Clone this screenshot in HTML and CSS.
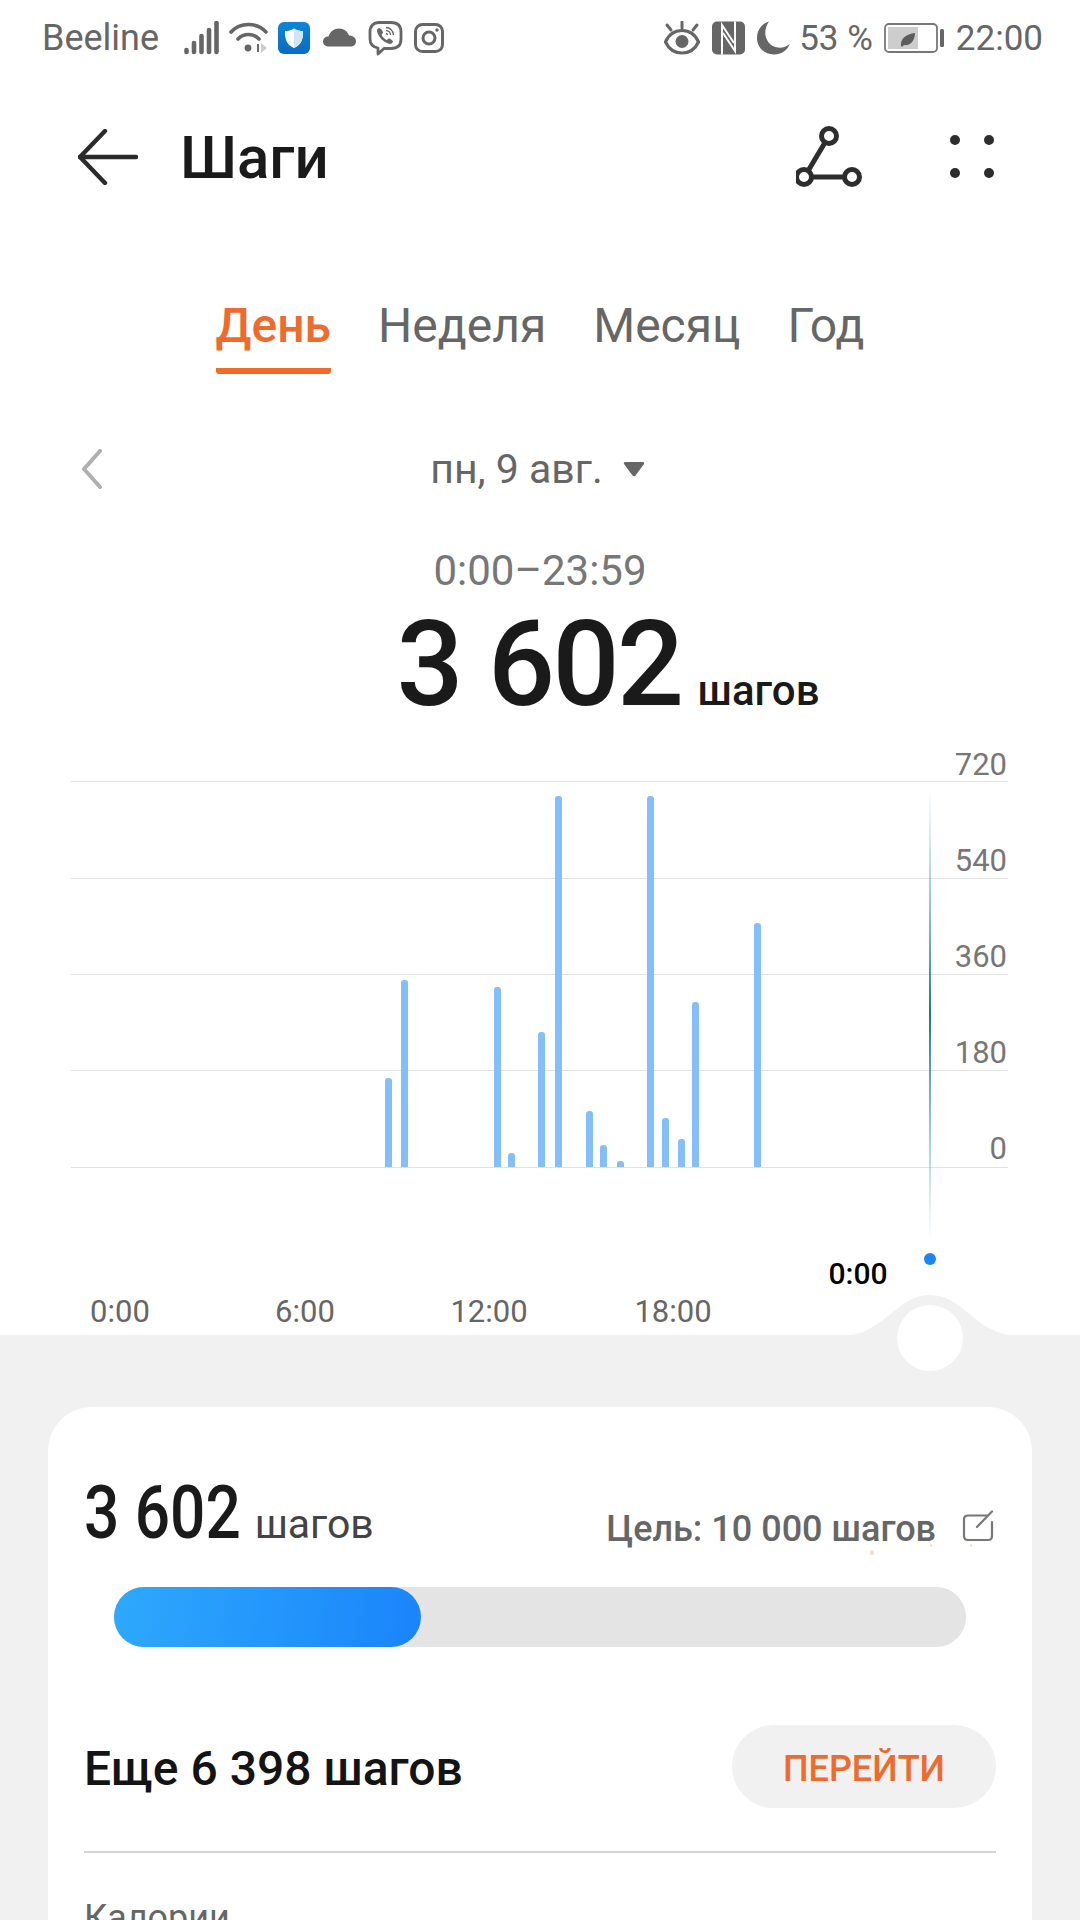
FILE: index.html
```html
<!DOCTYPE html>
<html lang="ru">
<head>
    <meta charset="utf-8">
    <title>Шаги</title>
    <link rel="stylesheet" href="styles.css">
</head>
<body>
    <div class="status-bar">
        <div class="status-left">
            <span class="carrier">Beeline</span>
            <svg class="ico" width="35" height="34" viewBox="0 0 35 34"><g stroke="#666" stroke-width="4.6" stroke-linecap="round"><path d="M2.5 29v2"/><path d="M10 22v9"/><path d="M17.5 15v16"/><path d="M25 9v22"/><path d="M32.5 2v29"/></g></svg>
            <svg class="ico" width="39" height="34" viewBox="0 0 39 34"><g fill="none" stroke="#666" stroke-width="3.6" stroke-linecap="round"><path d="M2 11C11 1 28 1 37 11"/><path d="M9 18C14.500 12 24.500 12 30 18"/></g><circle cx="19" cy="27" r="3.400" fill="#666"/><path d="M28 31V23h2v8z" fill="#666"/><path d="M32 22l6 5-6 5z" fill="#ccc"/></svg>
            <svg class="ico" width="35" height="34" viewBox="0 0 35 34"><defs><linearGradient id="shieldBg" x1="0" y1="0" x2="0" y2="1"><stop offset="0" stop-color="#0c86d8"/><stop offset="1" stop-color="#0a6cbd"/></linearGradient></defs><rect x="0" y="1" width="32" height="32" rx="6" fill="url(#shieldBg)"/><path d="M16 7.500C19 9.500 22 10 25 10C25.500 18 23 24 16 27C9 24 6.500 18 7 10C10 10 13 9.500 16 7.500Z" fill="#fff"/><path d="M16 7.500C19 9.500 22 10 25 10C25.500 18 23 24 16 27Z" fill="#cfe6f6"/></svg>
            <svg class="ico" width="35" height="34" viewBox="0 0 35 34"><path d="M6 25.500C2.500 25.500 0 23.500 0 20.500C0 17.500 2.500 15.500 5.500 15.500C7 10.500 11 7.500 16 7.500C21 7.500 24.500 10.500 26 14.500C30 14.500 33 17 33 20.500C33 23.500 30.500 25.500 27.500 25.500Z" fill="#666"/></svg>
            <svg class="ico" width="36" height="36" viewBox="0 0 36 36"><path d="M11 2.500H23C29.500 2.500 33 6 33 12V19C33 25 29.500 28.500 23 28.500H16L10 34V28C5 27 2 24 2 19V12C2 6 5.500 2.500 11 2.500Z" fill="none" stroke="#666" stroke-width="2.800" stroke-linejoin="round"/><path d="M11 8C9 8.500 8.500 10.500 9.500 13C11.500 18 15 21.500 20 23.500C22.500 24.500 24.500 23.500 25 21.500C25 20.500 21.500 18 20.500 18.500L19 20C17 19.500 14 16.500 13.500 14.500L15 13C15.500 12 13 8 11 8Z" fill="#666"/><g fill="none" stroke="#666" stroke-width="1.300"><path d="M18 7.500C22 7.500 25.500 11 25.500 15"/><path d="M18 10.500C20.500 10.500 22.500 12.500 22.500 15"/><path d="M18 13.500C19 13.500 19.500 14 19.500 15"/></g></svg>
            <svg class="ico" width="30" height="30" viewBox="0 0 30 30"><rect x="1.500" y="1.500" width="27" height="27" rx="7" fill="none" stroke="#666" stroke-width="3"/><circle cx="15" cy="15" r="6" fill="none" stroke="#666" stroke-width="3"/><circle cx="23" cy="7" r="1.700" fill="#666"/></svg>
        </div>
        <div class="status-right">
            <svg class="ico" width="39" height="34" viewBox="0 0 39 34"><g stroke="#666" stroke-width="3" stroke-linecap="round" fill="none"><path d="M18 1v6"/><path d="M3 4l4 5"/><path d="M33 4l-4 5"/></g><path d="M1.500 21C5 13 11 9.500 18 9.500C25 9.500 31 13 34.500 21C31 28.500 25 32 18 32C11 32 5 28.500 1.500 21Z" fill="none" stroke="#666" stroke-width="3.200"/><circle cx="18" cy="20.500" r="6.500" fill="#666"/></svg>
            <svg class="ico" width="36" height="34" viewBox="0 0 36 34"><rect x="0" y="0.500" width="33" height="33" rx="5" fill="#666"/><g fill="none" stroke="#fff" stroke-width="2"><path d="M10 33.500V4L22 22"/><path d="M23 0.500V30L11 12"/></g></svg>
            <svg class="ico" width="33" height="34" viewBox="0 0 33 34"><path d="M12 0.500C4 3 0 10 0 17C0 26.500 7.500 33.500 17 33.500C24 33.500 30 29.500 33 23C27 28 17 28 12 22C7 16 7 8 12 0.500Z" fill="#666"/></svg>
            <span class="battery-pct">53 %</span>
            <svg class="ico" width="65" height="34" viewBox="0 0 65 34"><rect x="3" y="3" width="52" height="28" rx="4" fill="none" stroke="#777" stroke-width="1.800"/><rect x="6" y="6" width="30" height="22" fill="#cdcdcd"/><rect x="58" y="8" width="4" height="18" rx="1.500" fill="#666"/><path d="M19 25C18 18 24 13 33 12C33 20 28 25 22 24L20 26Z" fill="#5c5c5c"/></svg>
            <span class="clock">22:00</span>
        </div>
    </div>

    <div class="top-bar">
        <svg class="back-arrow" width="60" height="56" viewBox="0 0 60 56"><g fill="none" stroke="#2b2b2b" stroke-width="4.400" stroke-linecap="round" stroke-linejoin="round"><path d="M27 2L2 28L27 54"/><path d="M2 28H58"/></g></svg>
        <h1 class="page-title">Шаги</h1>
        <svg class="path-icon" width="66" height="64" viewBox="0 0 66 64"><g fill="none" stroke="#2d2d2d" stroke-width="5"><circle cx="33" cy="11" r="7.500"/><circle cx="8" cy="52" r="7.500"/><circle cx="56" cy="52" r="7.500"/><path d="M29 17.500L12 46"/><path d="M15.500 52H48.500"/></g></svg>
        <svg class="more-icon" width="44" height="44" viewBox="0 0 44 44"><g fill="#2d2d2d"><circle cx="5" cy="5" r="5"/><circle cx="39" cy="5" r="5"/><circle cx="5" cy="38" r="5"/><circle cx="39" cy="38" r="5"/></g></svg>
    </div>

    <div class="tabs">
        <div class="tab tab-active">День</div>
        <div class="tab">Неделя</div>
        <div class="tab">Месяц</div>
        <div class="tab">Год</div>
    </div>

    <div class="date-row">
        <svg class="date-prev" width="24" height="40" viewBox="0 0 24 40"><path d="M20 2L4 20L20 38" fill="none" stroke="#b0b0b0" stroke-width="4" stroke-linecap="round" stroke-linejoin="round"/></svg>
        <span class="date-text">пн, 9 авг.</span>
        <svg class="date-caret" width="22" height="16" viewBox="0 0 22 16"><path d="M2 1H20C21 1 21.500 2 21 3L12.500 14.500C11.800 15.500 10.200 15.500 9.500 14.500L1 3C0.500 2 1 1 2 1Z" fill="#666"/></svg>
    </div>

    <div class="range">0:00–23:59</div>
    <div class="total"><span class="total-num">3 602</span><span class="total-unit">шагов</span></div>

    <svg class="chart" width="1080" height="595" viewBox="0 740 1080 595">
        <defs>
            <linearGradient id="cursorLine" x1="0" y1="0" x2="0" y2="1">
                <stop offset="0" stop-color="#4aa0c8" stop-opacity="0"/>
                <stop offset="0.5" stop-color="#13799f"/>
                <stop offset="1" stop-color="#4aa0c8" stop-opacity="0"/>
            </linearGradient>
            <clipPath id="barClip"><rect x="0" y="740" width="1080" height="427"/></clipPath>
        </defs>
        <g class="grid-lines">
            <line x1="71" x2="1008" y1="781.500" y2="781.500"/>
            <line x1="71" x2="1008" y1="878.500" y2="878.500"/>
            <line x1="71" x2="1008" y1="974.500" y2="974.500"/>
            <line x1="71" x2="1008" y1="1070.500" y2="1070.500"/>
            <line x1="71" x2="1008" y1="1167.500" y2="1167.500"/>
        </g>
        <g class="bars" clip-path="url(#barClip)">
            <rect x="385" y="1078" width="7" height="95" rx="3"/>
            <rect x="401" y="980" width="7" height="193" rx="3"/>
            <rect x="494" y="987" width="7" height="186" rx="3"/>
            <rect x="508" y="1153" width="7" height="20" rx="3"/>
            <rect x="538" y="1032" width="7" height="141" rx="3"/>
            <rect x="555" y="796" width="7" height="377" rx="3"/>
            <rect x="586" y="1111" width="7" height="62" rx="3"/>
            <rect x="600" y="1145" width="7" height="28" rx="3"/>
            <rect x="617" y="1161" width="7" height="12" rx="3"/>
            <rect x="647" y="796" width="7" height="377" rx="3"/>
            <rect x="662" y="1118" width="7" height="55" rx="3"/>
            <rect x="678" y="1139" width="7" height="34" rx="3"/>
            <rect x="692" y="1002" width="7" height="171" rx="3"/>
            <rect x="754" y="923" width="7" height="250" rx="3"/>
        </g>
        <rect x="929" y="788" width="2" height="452" fill="url(#cursorLine)"/>
        <g class="y-labels">
            <text x="1007" y="775">720</text>
            <text x="1007" y="871">540</text>
            <text x="1007" y="967">360</text>
            <text x="1007" y="1063">180</text>
            <text x="1007" y="1159">0</text>
        </g>
        <g class="x-labels">
            <text x="120" y="1322">0:00</text>
            <text x="305" y="1322">6:00</text>
            <text x="489" y="1322">12:00</text>
            <text x="673" y="1322">18:00</text>
        </g>
        <text class="cursor-time" x="858" y="1284">0:00</text>
        <circle cx="930" cy="1259" r="6" fill="#1a87f5"/>
        <path d="M840 1336C885 1336 895 1295 930 1295C965 1295 975 1336 1020 1336Z" fill="#f1f1f1"/>
        <circle cx="930" cy="1338" r="33" fill="#fff"/>
    </svg>

    <div class="bottom-panel">
        <div class="card">
            <div class="card-head">
                <div class="card-steps"><span class="card-num">3 602</span><span class="card-unit">шагов</span></div>
                <div class="card-goal">
                    <span>Цель: 10 000 шагов</span>
                    <svg width="32" height="32" viewBox="0 0 32 32"><path d="M25 5.500H6C3.500 5.500 2 7 2 9.500V26C2 28.500 3.500 30 6 30H26C28.500 30 30 28.500 30 26V12" fill="none" stroke="#777" stroke-width="2.200" stroke-linecap="round"/><path d="M15 17L30 1.500" fill="none" stroke="#777" stroke-width="2.200" stroke-linecap="round"/></svg>
                </div>
            </div>
            <div class="progress"><div class="progress-fill" style="width: 36%"></div></div>
            <div class="remain-row">
                <span class="remain-text">Еще 6 398 шагов</span>
                <div class="go-btn">ПЕРЕЙТИ</div>
            </div>
            <div class="divider"></div>
            <div class="stat-label">Калории</div>
            <i class="speck speck-a"></i>
            <i class="speck speck-b"></i>
            <i class="speck speck-c"></i>
        </div>
    </div>
</body>
</html>
```

FILE: styles.css
```css
* {
    box-sizing: border-box;
}
html, body {
    margin: 0;
    height: 1920px;
    overflow: hidden;
}
body {
    width: 1080px;
    font-family: Roboto, "Noto Sans", sans-serif;
    background: #fff;
    color: #1a1a1a;
}
.ico {
    display: block;
    flex: none;
}
.status-bar {
    display: flex;
    justify-content: space-between;
    align-items: center;
    height: 76px;
    padding: 0 37px 0 42px;
    color: #666;
    font-size: 36px;
}
.status-left {
    display: flex;
    align-items: center;
    gap: 10px;
}
.carrier {
    margin-right: 15px;
}
.status-right {
    display: flex;
    align-items: center;
    gap: 9px;
    font-size: 35px;
}
.top-bar {
    display: flex;
    align-items: center;
    height: 162px;
    padding: 0 86px 0 78px;
}
.page-title {
    margin: 0 0 0 42px;
    font-size: 60px;
    font-weight: 500;
    color: #1a1a1a;
}
.path-icon {
    margin-left: auto;
}
.more-icon {
    margin-left: 88px;
}
.tabs {
    display: flex;
    justify-content: center;
    gap: 47px;
    margin-top: 58px;
}
.tab {
    height: 78px;
    line-height: 60px;
    font-size: 48px;
    color: #666;
}
.tab-active {
    color: #ee6b2d;
    font-weight: 500;
    border-bottom: 6px solid #ee6b2d;
    border-radius: 0 0 3px 3px;
}
.date-row {
    position: relative;
    display: flex;
    justify-content: center;
    align-items: center;
    gap: 20px;
    height: 50px;
    margin-top: 70px;
    padding-right: 5px;
    color: #666;
    font-size: 41px;
}
.date-prev {
    position: absolute;
    left: 80px;
    top: 5px;
}
.range {
    margin-top: 54px;
    line-height: 46px;
    text-align: center;
    font-size: 42px;
    color: #777;
}
.total {
    display: flex;
    justify-content: center;
    align-items: baseline;
    gap: 16px;
    height: 120px;
    margin-top: 11px;
    padding-left: 136px;
    line-height: 120px;
    color: #1a1a1a;
}
.total-num {
    font-size: 118px;
    font-weight: 500;
    letter-spacing: -2.5px;
}
.total-unit {
    font-size: 42px;
    font-weight: 500;
}
.chart {
    position: relative;
    z-index: 1;
    display: block;
    margin-top: 15px;
    overflow: visible;
}
.grid-lines line {
    stroke: #e2e2e2;
    stroke-width: 1;
}
.bars rect {
    fill: #85bffb;
}
.y-labels text {
    font-size: 31px;
    fill: #777;
    text-anchor: end;
}
.x-labels text {
    font-size: 31px;
    fill: #666;
    text-anchor: middle;
}
.cursor-time {
    font-size: 30px;
    font-weight: 500;
    fill: #000;
    text-anchor: middle;
}
.bottom-panel {
    height: 585px;
    padding: 72px 48px 0;
    background: #f1f1f1;
}
.card {
    position: relative;
    height: 600px;
    padding: 66px 36px 0;
    background: #fff;
    border-radius: 44px;
}
.card-head {
    display: flex;
    justify-content: space-between;
    align-items: flex-start;
    height: 80px;
}
.card-steps {
    line-height: 80px;
}
.card-num {
    display: inline-block;
    margin-right: -30px;
    font-size: 74px;
    font-weight: 500;
    color: #1a1a1a;
    transform: scaleX(.84);
    transform-origin: 0 50%;
}
.card-unit {
    margin-left: 14px;
    font-size: 41px;
    color: #444;
}
.card-goal {
    display: flex;
    align-items: flex-start;
    gap: 26px;
    margin: 35px 2px 0 0;
    line-height: 42px;
    font-size: 36px;
    font-weight: 500;
    color: #666;
}
.card-goal svg {
    margin-top: 2px;
}
.progress {
    height: 60px;
    margin: 34px 30px 0;
    background: #e4e4e4;
    border-radius: 30px;
}
.progress-fill {
    height: 100%;
    background: linear-gradient(100deg, #2ea9fd, #1a84fb);
    border-radius: 30px;
}
.remain-row {
    display: flex;
    justify-content: space-between;
    align-items: center;
    height: 83px;
    margin-top: 78px;
}
.remain-text {
    padding-top: 3px;
    font-size: 48px;
    font-weight: 500;
    color: #141414;
}
.go-btn {
    display: flex;
    justify-content: center;
    align-items: center;
    width: 264px;
    height: 83px;
    padding-top: 4px;
    background: #f1f1f1;
    border-radius: 42px;
    font-size: 36px;
    font-weight: 500;
    color: #ee6b2d;
}
.divider {
    height: 2px;
    margin-top: 43px;
    background: #d4d4d4;
}
.stat-label {
    margin-top: 44px;
    font-size: 36px;
    color: #666;
}
.speck {
    position: absolute;
    width: 4px;
    height: 5px;
    border-radius: 50%;
    background: #f9dcbc;
}
.speck-a {
    left: 822px;
    top: 143px;
}
.speck-b {
    left: 882px;
    top: 137px;
    width: 2px;
    height: 3px;
}
.speck-c {
    left: 922px;
    top: 137px;
    width: 2px;
    height: 3px;
}
```
